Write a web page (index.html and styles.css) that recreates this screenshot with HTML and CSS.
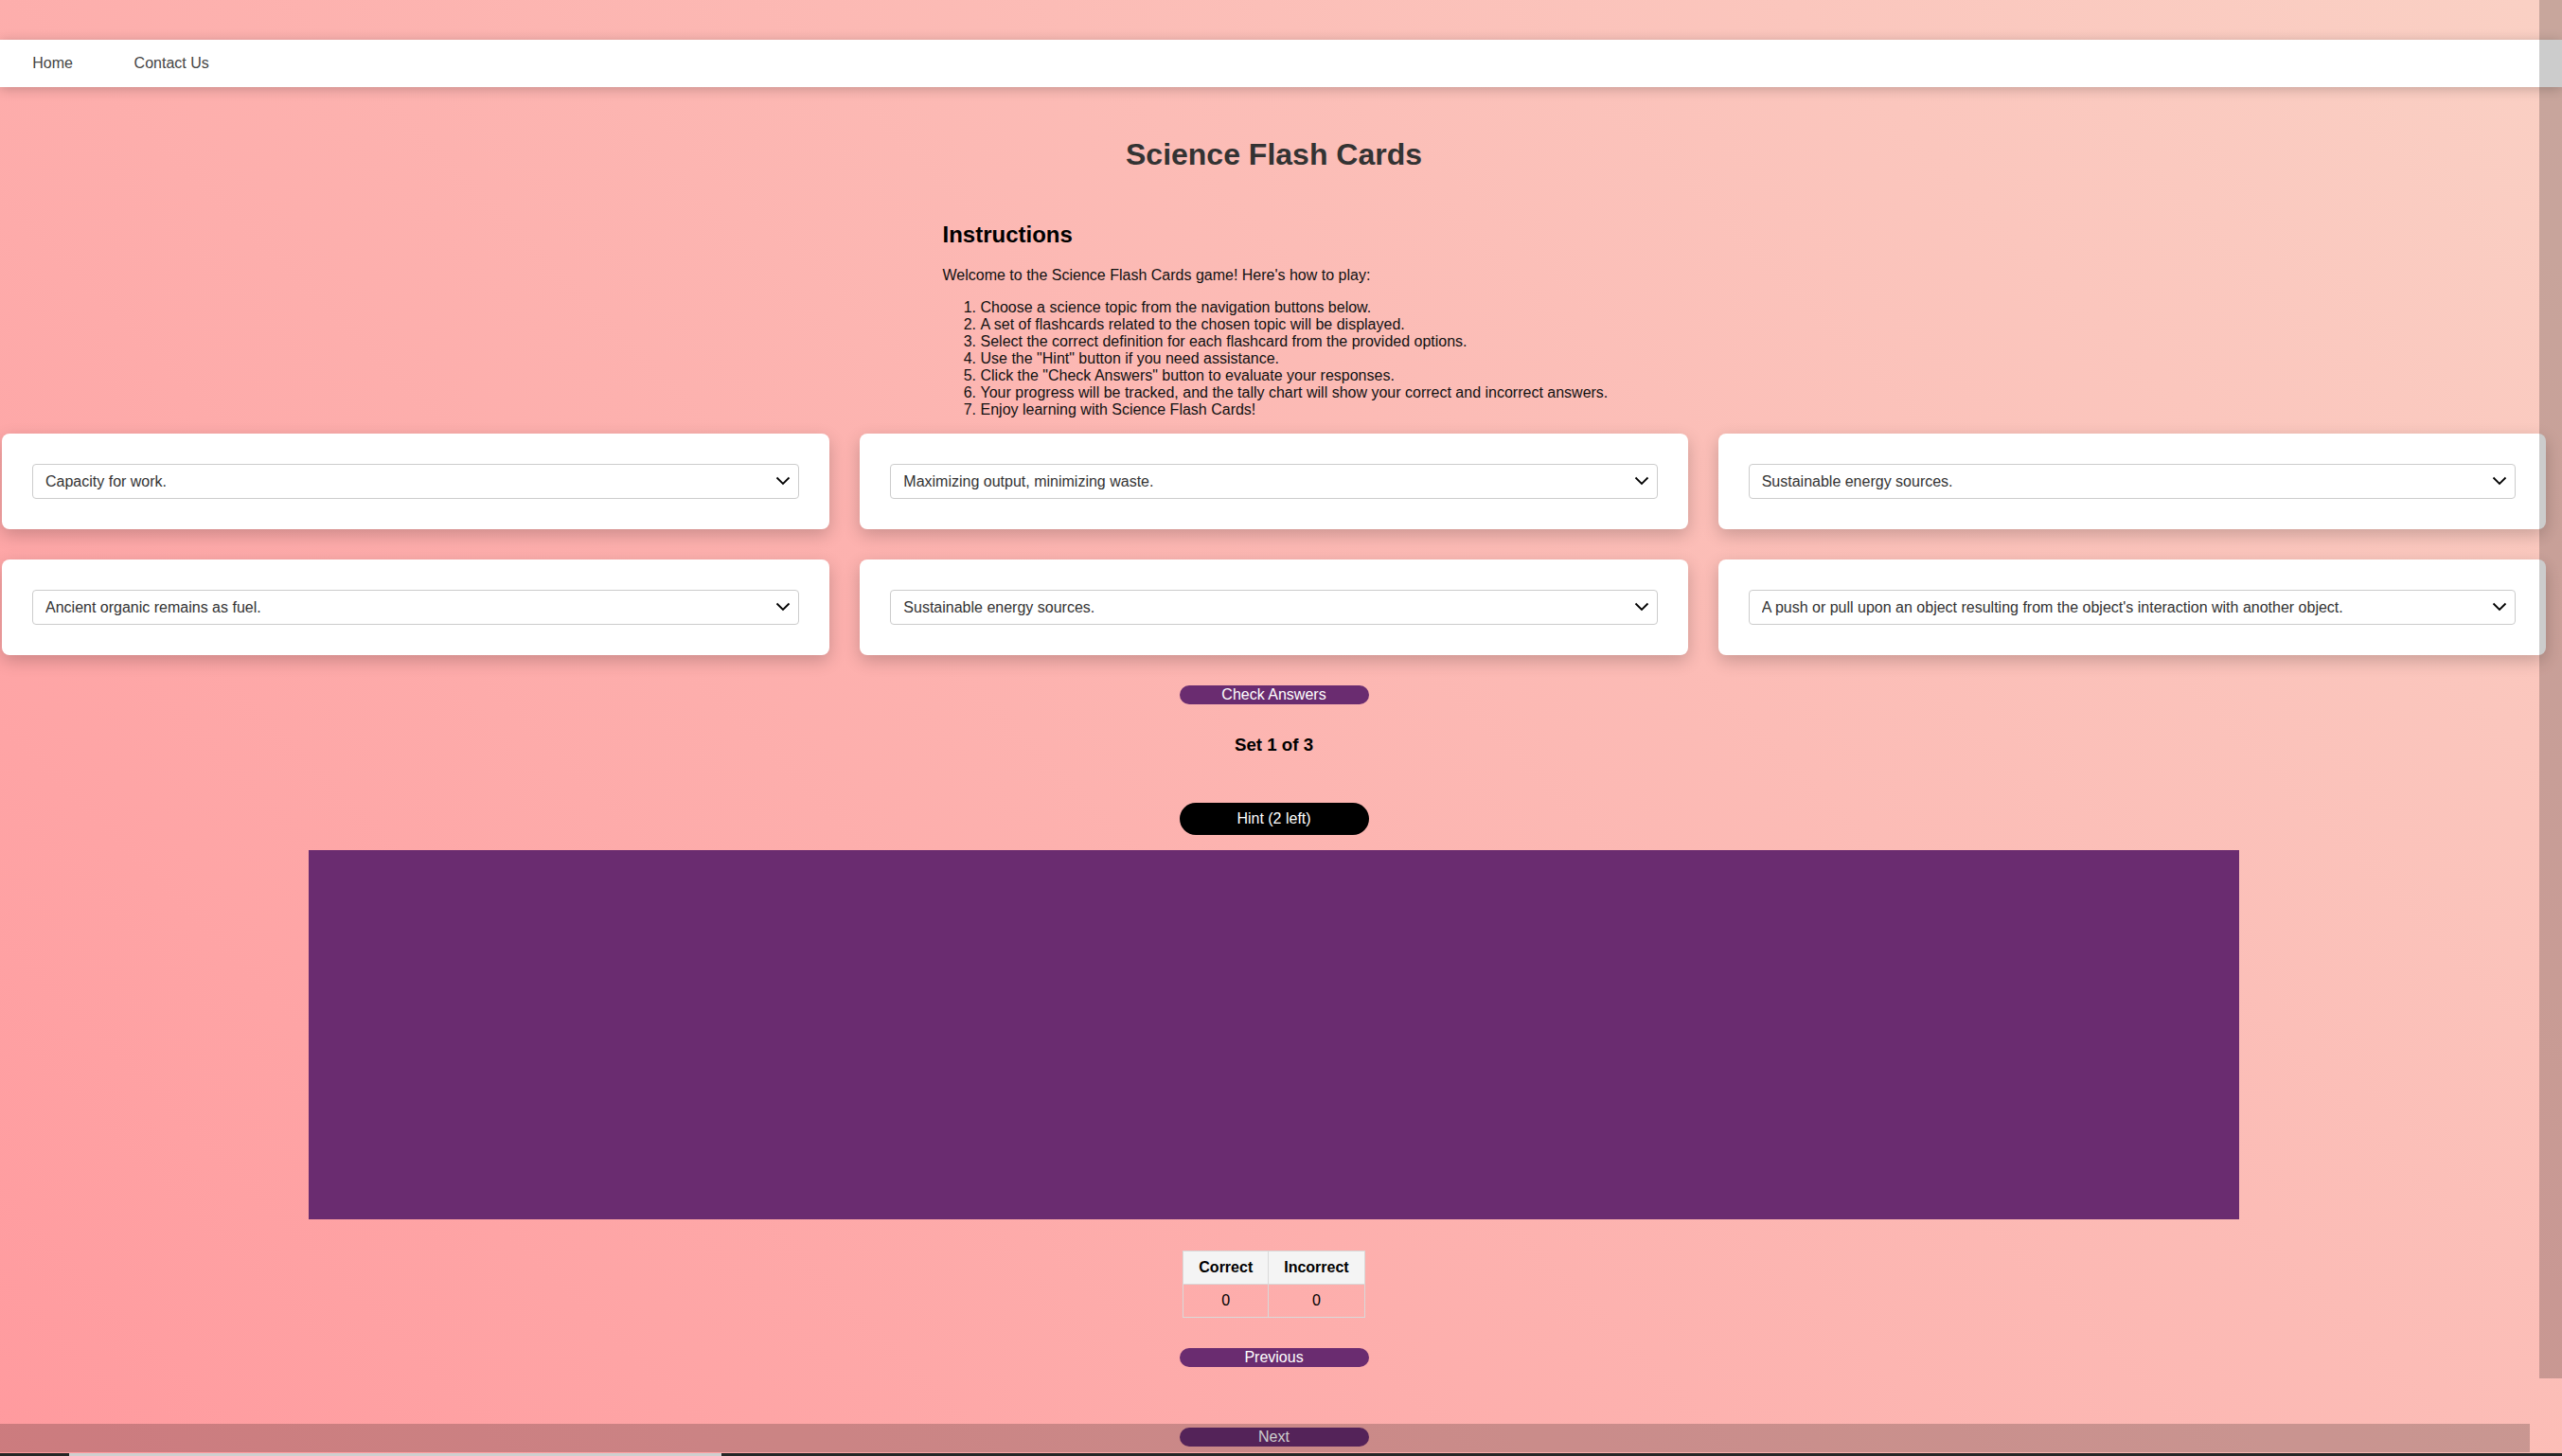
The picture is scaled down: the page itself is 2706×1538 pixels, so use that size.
FILE: index.html
```html
<!DOCTYPE html>
<html lang="en">
<head>
<meta charset="utf-8">
<title>Science Flash Cards</title>
<link rel="stylesheet" href="styles.css">
</head>
<body>
<nav class="topnav">
  <a class="nav-link" href="#">Home</a>
  <a class="nav-link" href="#">Contact Us</a>
</nav>

<main class="page">
  <h1 class="title">Science Flash Cards</h1>

  <section class="instructions">
    <h2 class="instr-title">Instructions</h2>
    <p class="instr-text">Welcome to the Science Flash Cards game! Here's how to play:</p>
    <ol class="instr-list">
      <li>Choose a science topic from the navigation buttons below.</li>
      <li>A set of flashcards related to the chosen topic will be displayed.</li>
      <li>Select the correct definition for each flashcard from the provided options.</li>
      <li>Use the "Hint" button if you need assistance.</li>
      <li>Click the "Check Answers" button to evaluate your responses.</li>
      <li>Your progress will be tracked, and the tally chart will show your correct and incorrect answers.</li>
      <li>Enjoy learning with Science Flash Cards!</li>
    </ol>
  </section>

  <div class="cards">
    <div class="card">
      <div class="select-wrap">
        <select class="answer"><option>Capacity for work.</option><option>Maximizing output, minimizing waste.</option></select>
        <svg class="chev" width="16" height="10" viewBox="0 0 16 10"><path d="M1.5 1.5 L8 8 L14.5 1.5" fill="none" stroke="#000" stroke-width="1.8"/></svg>
      </div>
    </div>
    <div class="card">
      <div class="select-wrap">
        <select class="answer"><option>Maximizing output, minimizing waste.</option><option>Capacity for work.</option></select>
        <svg class="chev" width="16" height="10" viewBox="0 0 16 10"><path d="M1.5 1.5 L8 8 L14.5 1.5" fill="none" stroke="#000" stroke-width="1.8"/></svg>
      </div>
    </div>
    <div class="card">
      <div class="select-wrap">
        <select class="answer"><option>Sustainable energy sources.</option><option>Capacity for work.</option></select>
        <svg class="chev" width="16" height="10" viewBox="0 0 16 10"><path d="M1.5 1.5 L8 8 L14.5 1.5" fill="none" stroke="#000" stroke-width="1.8"/></svg>
      </div>
    </div>
    <div class="card">
      <div class="select-wrap">
        <select class="answer"><option>Ancient organic remains as fuel.</option><option>Capacity for work.</option></select>
        <svg class="chev" width="16" height="10" viewBox="0 0 16 10"><path d="M1.5 1.5 L8 8 L14.5 1.5" fill="none" stroke="#000" stroke-width="1.8"/></svg>
      </div>
    </div>
    <div class="card">
      <div class="select-wrap">
        <select class="answer"><option>Sustainable energy sources.</option><option>Capacity for work.</option></select>
        <svg class="chev" width="16" height="10" viewBox="0 0 16 10"><path d="M1.5 1.5 L8 8 L14.5 1.5" fill="none" stroke="#000" stroke-width="1.8"/></svg>
      </div>
    </div>
    <div class="card">
      <div class="select-wrap">
        <select class="answer"><option>A push or pull upon an object resulting from the object's interaction with another object.</option><option>Capacity for work.</option></select>
        <svg class="chev" width="16" height="10" viewBox="0 0 16 10"><path d="M1.5 1.5 L8 8 L14.5 1.5" fill="none" stroke="#000" stroke-width="1.8"/></svg>
      </div>
    </div>
  </div>

  <button class="btn btn-purple btn-check">Check Answers</button>
  <h3 class="set-label">Set 1 of 3</h3>
  <button class="btn btn-hint">Hint (2 left)</button>
  <div class="hint-box"></div>

  <table class="tally">
    <thead><tr><th>Correct</th><th>Incorrect</th></tr></thead>
    <tbody><tr><td>0</td><td>0</td></tr></tbody>
  </table>

  <button class="btn btn-purple btn-prev">Previous</button>
  <button class="btn btn-purple btn-next">Next</button>
</main>

<div class="thumb-v"></div>
<div class="thumb-h"></div>
<div class="bottom-bar"><div class="bottom-bar-thumb"></div></div>
</body>
</html>
```

FILE: styles.css
```css
html {
  min-height: 100%;
  background: linear-gradient(45deg, #ff9a9e 0%, #fad0c4 99%, #fad0c4 100%);
  overflow: hidden;
}

body {
  margin: 0;
  font-family: "Liberation Sans", Arial, sans-serif;
  font-size: 16px;
  color: #111;
  overflow: hidden;
}

.topnav {
  margin-top: 42px;
  height: 50px;
  background: #fff;
  display: flex;
  align-items: center;
  padding-left: 2px;
  box-shadow: 0 2px 12px rgba(0, 0, 0, 0.22);
}

.nav-link {
  padding: 0 32.3px;
  color: #444;
  text-decoration: none;
  font-size: 16px;
}

.page {
  margin-right: 15px;
  padding-top: 53px;
  display: flow-root;
}

.title {
  margin: 0;
  text-align: center;
  font-size: 32px;
  font-weight: bold;
  color: #333;
}

.instructions {
  width: 700px;
  margin: 52px auto 0;
}

.instr-title {
  margin: 0 0 20px;
  font-size: 24px;
  color: #000;
}

.instr-text {
  margin: 0 0 16px;
  line-height: 18px;
  color: #111;
}

.instr-list {
  margin: 0 0 16px;
  padding-left: 40px;
  line-height: 18px;
  color: #111;
}

.instr-list li {
  white-space: nowrap;
}

.cards {
  display: grid;
  grid-template-columns: repeat(3, 1fr);
  gap: 32px;
  padding: 0 2px;
}

.card {
  background: #fff;
  border-radius: 8px;
  padding: 32px;
  box-shadow: 0 6px 18px rgba(0, 0, 0, 0.2);
}

.select-wrap {
  position: relative;
}

.answer {
  -webkit-appearance: none;
  appearance: none;
  display: block;
  width: 100%;
  height: 37px;
  border: 1px solid #ccc;
  border-radius: 4px;
  background: #fff;
  padding: 0 40px 0 13px;
  font-family: "Liberation Sans", Arial, sans-serif;
  font-size: 16px;
  color: #333;
}

.chev {
  position: absolute;
  right: 9px;
  top: 13px;
  pointer-events: none;
}

.btn {
  display: block;
  width: 200px;
  margin: 0 auto;
  border: none;
  color: #fff;
  font-family: "Liberation Sans", Arial, sans-serif;
  font-size: 16px;
  border-radius: 20px;
  cursor: pointer;
}

.btn-purple {
  background: #6a2c70;
  padding: 1px 6px;
}

.btn-check {
  margin-top: 32px;
}

.set-label {
  margin: 32px 0 0;
  text-align: center;
  font-size: 18.72px;
  color: #000;
}

.btn-hint {
  margin-top: 50px;
  background: #000;
  padding: 8px 6px;
}

.hint-box {
  width: 75%;
  height: 370px;
  padding: 10px;
  margin: 16px auto 0;
  background: #6a2c70;
}

.tally {
  margin: 33px auto 0;
  border-collapse: collapse;
}

.tally th,
.tally td {
  border: 1px solid #d9d9d9;
  padding: 8px 16px;
  text-align: center;
  font-size: 16px;
  color: #000;
}

.tally th {
  background: #f4f4f4;
  font-weight: bold;
}

.btn-prev {
  margin-top: 32px;
}

.btn-next {
  margin-top: 64px;
  margin-bottom: 32px;
}

.thumb-v {
  position: fixed;
  top: 0;
  right: 0;
  width: 24px;
  height: 1456px;
  background: rgba(0, 0, 0, 0.2);
}

.thumb-h {
  position: fixed;
  left: 0;
  top: 1504px;
  width: 2672px;
  height: 30px;
  background: rgba(0, 0, 0, 0.2);
}

.bottom-bar {
  position: fixed;
  left: 0;
  right: 0;
  bottom: 0;
  height: 3px;
  background: #262626;
}

.bottom-bar-thumb {
  margin-left: 73px;
  width: 689px;
  height: 3px;
  background: #cfcfcf;
}
```
